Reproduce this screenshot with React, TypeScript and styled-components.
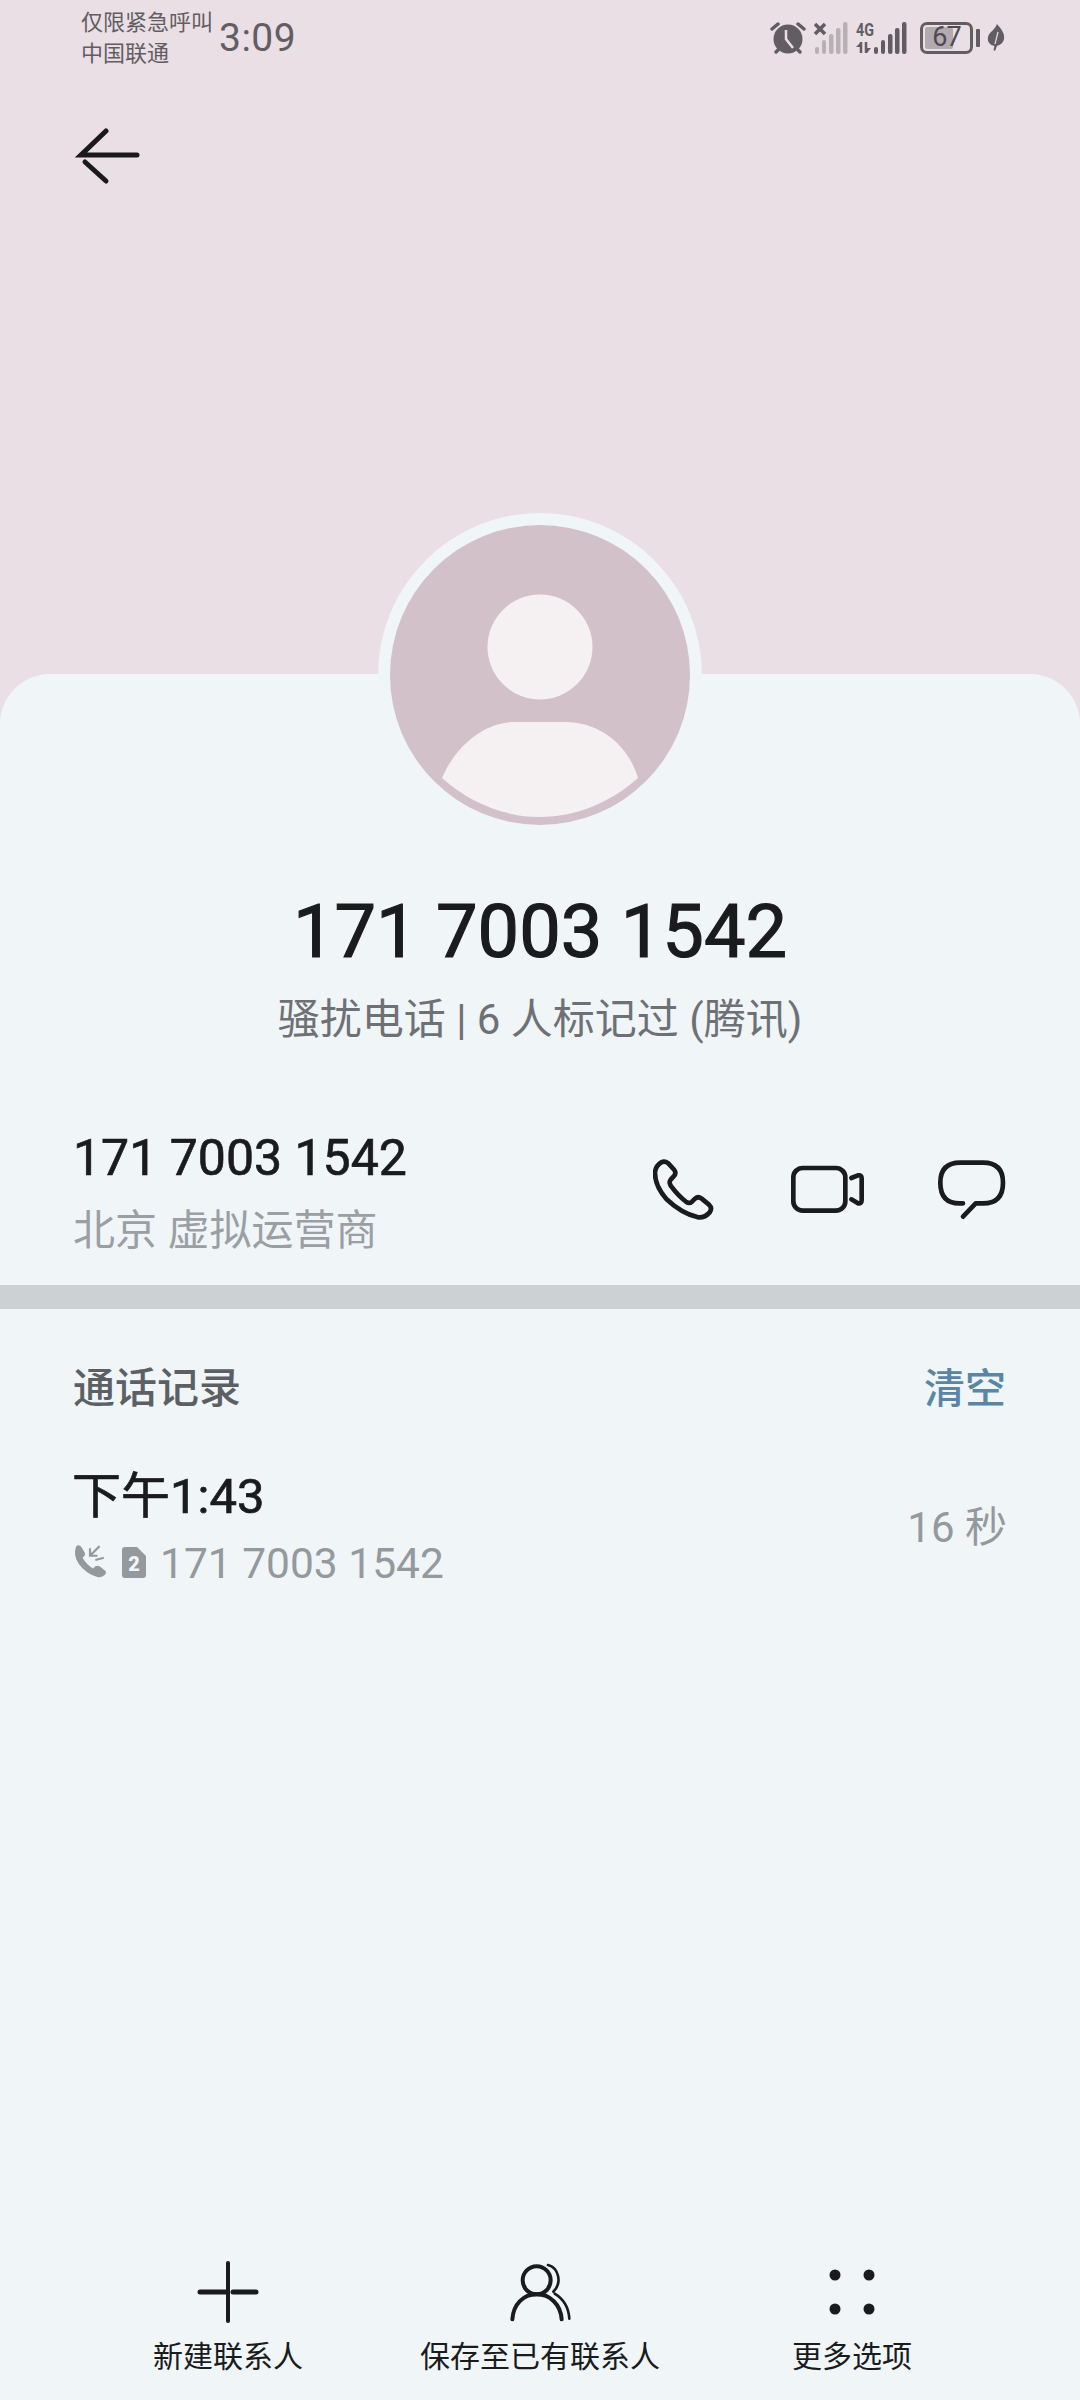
import styled, { createGlobalStyle } from "styled-components"

const GlobalStyle = createGlobalStyle`
  html, body {
    margin: 0;
    padding: 0;
    background: #e9dfe5;
  }
  * {
    box-sizing: border-box;
  }
`

const Page = styled.div`
  width: 1080px;
  height: 2400px;
  display: flex;
  flex-direction: column;
  overflow: hidden;
  background: #e9dfe5;
  font-family: Roboto, "Noto Sans CJK SC", sans-serif;
`

const StatusBar = styled.div`
  height: 70px;
  padding: 5px 75px 0 81px;
  display: flex;
  align-items: center;
  color: #625d63;
`

const Carrier = styled.div`
  width: 138px;
  font-size: 22px;
  line-height: 31px;
  padding-top: 1px;
  white-space: nowrap;
`

const Clock = styled.div`
  font-size: 39px;
  letter-spacing: 0.5px;
`

const StatusIcons = styled.div`
  margin-left: auto;
  display: flex;
  align-items: center;
  gap: 8px;
`

const Battery = styled.div`
  position: relative;
  width: 53px;
  height: 32px;
  margin-left: 4px;
  border: 3px solid #625d63;
  border-radius: 7px;
  display: flex;
  align-items: center;
  justify-content: center;
  font-size: 27px;
  line-height: 1;
  letter-spacing: -1px;
  color: #4f4a50;

  &::before {
    content: "";
    position: absolute;
    left: 2px;
    top: 2px;
    bottom: 2px;
    width: 28px;
    border-radius: 2px;
    background: #b3aaaf;
  }

  &::after {
    content: "";
    position: absolute;
    right: -10px;
    top: 4px;
    width: 4px;
    height: 18px;
    border-radius: 1px;
    background: #625d63;
  }

  span {
    position: relative;
  }
`

const LeafWrap = styled.div`
  margin-left: 6px;
  display: flex;
`

const TopBar = styled.div`
  height: 604px;
  padding: 55px 0 0 75px;
`

const Sheet = styled.div`
  flex: 1;
  position: relative;
  display: flex;
  flex-direction: column;
  background: #f0f5f8;
  border-radius: 50px 50px 0 0;
`

const Avatar = styled.div`
  width: 324px;
  height: 324px;
  margin: -161px auto 0;
  padding: 12px;
  border-radius: 50%;
  background: #f0f5f8;
  flex-shrink: 0;
`

const AvatarCircle = styled.div`
  width: 300px;
  height: 300px;
  border-radius: 50%;
  background: #d2c1c8;

  svg {
    display: block;
  }
`

const Name = styled.div`
  margin-top: 51px;
  text-align: center;
  font-size: 74px;
  line-height: 88px;
  font-weight: 400;
  -webkit-text-stroke: 1.2px #1a1b1d;
  color: #1a1b1d;
`

const Tagline = styled.div`
  margin-top: 16px;
  text-align: center;
  font-size: 42px;
  line-height: 56px;
  color: #6d7175;
`

const NumberRow = styled.div`
  margin-top: 80px;
  padding: 0 74px 0 73px;
  height: 157px;
  display: flex;
  align-items: flex-start;
`

const NumberInfo = styled.div`
  flex: 1;
`

const Number = styled.div`
  font-size: 50px;
  line-height: 60px;
  font-weight: 400;
  -webkit-text-stroke: 0.7px #1a1b1d;
  color: #1a1b1d;
`

const Place = styled.div`
  margin-top: 15px;
  font-size: 42px;
  line-height: 56px;
  color: #9a9fa3;
`

const Actions = styled.div`
  display: flex;
  align-items: center;
  margin-top: 31px;
`

const ActionIcon = styled.svg<{ $left: number }>`
  display: block;
  margin-left: ${(p) => p.$left}px;
  fill: none;
  stroke: #1a1b1d;
  stroke-width: 14;
  stroke-linecap: round;
  stroke-linejoin: round;
`

const Divider = styled.div`
  height: 24px;
  background: #cdd1d4;
  flex-shrink: 0;
`

const SectionHead = styled.div`
  margin-top: 52px;
  padding: 0 74px 0 73px;
  display: flex;
  justify-content: space-between;
  align-items: center;
`

const SectionTitle = styled.div`
  font-size: 42px;
  line-height: 56px;
  font-weight: 500;
  color: #5c6064;
`

const ClearButton = styled.div`
  font-size: 41px;
  line-height: 56px;
  font-weight: 500;
  color: #5a86a6;
`

const CallRow = styled.div`
  margin-top: 50px;
  padding: 0 73px 0 72px;
  display: flex;
  justify-content: space-between;
  align-items: center;
`

const CallTime = styled.div`
  font-size: 49px;
  line-height: 60px;
  font-weight: 400;
  -webkit-text-stroke: 0.7px #1a1b1d;
  color: #1a1b1d;
`

const CallMeta = styled.div`
  margin-top: 9px;
  padding-left: 1px;
  display: flex;
  align-items: center;
  font-size: 42.5px;
  line-height: 56px;
  color: #94999d;

  svg {
    display: block;
    flex-shrink: 0;
  }
`

const SimBadge = styled.svg`
  margin: -4px 14px 0 15px;
`

const Duration = styled.div`
  font-size: 42px;
  line-height: 56px;
  margin-top: -3px;
  color: #94999d;
`

const Toolbar = styled.div`
  margin-top: auto;
  padding: 0 72px 23px;
  display: grid;
  grid-template-columns: repeat(3, 312px);
`

const ToolItem = styled.div`
  display: flex;
  flex-direction: column;
  align-items: center;
`

const ToolIcon = styled.svg<{ $shift?: number }>`
  display: block;
  margin-left: ${(p) => p.$shift ?? 0}px;
  fill: none;
  stroke: #1a1b1d;
  stroke-linecap: round;
`

const ToolLabel = styled.div`
  margin-top: 14px;
  font-size: 30px;
  line-height: 40px;
  color: #1a1b1d;
  white-space: nowrap;
`

const App = () => {
  return (
    <Page>
      <GlobalStyle />
      <StatusBar>
        <Carrier>
          仅限紧急呼叫
          <br />
          中国联通
        </Carrier>
        <Clock>3:09</Clock>
        <StatusIcons>
          <svg width="36" height="34" viewBox="0 0 36 34">
            <circle cx="18" cy="18" r="14.5" fill="#625d63" />
            <path d="M2 8 L8 3 M34 8 L28 3" stroke="#625d63" strokeWidth="3.5" strokeLinecap="round" />
            <path d="M6 31 L9 28 M30 31 L27 28" stroke="#625d63" strokeWidth="3.5" strokeLinecap="round" />
            <path d="M16 9 V18 L23 27" stroke="#e9dfe5" strokeWidth="2.5" fill="none" />
          </svg>
          <svg width="34" height="32" viewBox="0 0 34 32" fill="#b9b0b5">
            <path d="M1 2 L11 12 M11 2 L1 12" stroke="#625d63" strokeWidth="3.5" />
            <rect x="1" y="25" width="4" height="7" rx="2" />
            <rect x="8" y="18" width="4" height="14" rx="2" />
            <rect x="15" y="12" width="4.5" height="20" rx="2" />
            <rect x="22" y="6" width="4.5" height="26" rx="2" />
            <rect x="29" y="0" width="4.5" height="32" rx="2" />
          </svg>
          <svg width="52" height="40" viewBox="0 -4 52 40" fill="#625d63">
            <text x="0" y="13.5" fontFamily="Roboto" fontWeight="700" fontSize="18" textLength="18" lengthAdjust="spacingAndGlyphs">
              4G
            </text>
            <path d="M5 20 V31 M10 20 V31" stroke="#625d63" strokeWidth="2.5" />
            <path d="M0 25 L4 21 V25 Z M11 26 H15 L11 31 Z" />
            <rect x="18" y="25" width="4" height="7" rx="2" />
            <rect x="25" y="18" width="4" height="14" rx="2" />
            <rect x="32" y="12" width="4.5" height="20" rx="2" />
            <rect x="39" y="6" width="4.5" height="26" rx="2" />
            <rect x="46" y="0" width="4.5" height="32" rx="2" />
          </svg>
          <Battery>
            <span>67</span>
          </Battery>
          <LeafWrap>
            <svg width="18" height="27" viewBox="0 0 18 27">
              <path d="M10 0 C14 5 18 9 17 15 C16 20 12 21 10 22 L8 27 L6.5 26 L7.5 22 C3 21 0 18 1 13 C2 8 8 6 10 0 Z" fill="#625d63" />
              <path d="M11 8 L8 20" stroke="#e9dfe5" strokeWidth="1.2" />
            </svg>
          </LeafWrap>
        </StatusIcons>
      </StatusBar>
      <TopBar>
        <svg width="66" height="60" viewBox="74 125 66 60" fill="none" stroke="#1a1a1c" strokeWidth="5" strokeLinecap="round">
          <path d="M136 155 H80 L105 131" />
          <path d="M84 162 L105 181" />
        </svg>
      </TopBar>
      <Sheet>
        <Avatar>
          <AvatarCircle>
            <svg width="300" height="300" viewBox="390 525 300 300">
              <circle cx="540" cy="647" r="52.5" fill="#f5f1f3" />
              <path
                d="M442 778 C456 745 485 722 515 722 H565 C600 722 628 745 638 778 C610 803 575 817 540 817 C505 817 470 803 442 778 Z"
                fill="#f5f1f3"
              />
            </svg>
          </AvatarCircle>
        </Avatar>
        <Name>171 7003 1542</Name>
        <Tagline>骚扰电话 | 6 人标记过 (腾讯)</Tagline>
        <NumberRow>
          <NumberInfo>
            <Number>171 7003 1542</Number>
            <Place>北京 虚拟运营商</Place>
          </NumberInfo>
          <Actions>
            <ActionIcon $left={0} width="62" height="62" viewBox="100 85 186 186">
              <path d="M125 95 Q135 90 146 98 L164 118 Q171 128 162 137 L153 147 Q147 154 153 165 Q175 195 200 214 Q209 220 217 213 L226 204 Q235 196 245 203 L268 222 Q279 232 270 245 Q255 262 235 260 Q185 248 140 205 Q105 165 106 125 Q108 106 125 95 Z" />
            </ActionIcon>
            <ActionIcon $left={75} width="74" height="50" viewBox="512 103 222 150">
              <rect x="522" y="112" width="156" height="128" rx="28" />
              <path d="M696 142 L716 134 Q727 132 727 143 V208 Q727 220 716 218 L696 206" />
            </ActionIcon>
            <ActionIcon $left={74} width="68" height="60" viewBox="955 92 204 180">
              <path d="M1030 222 H1020 Q962 222 962 160 Q962 100 1022 100 H1090 Q1150 100 1150 160 Q1150 222 1090 222 H1068 L1030 262" />
            </ActionIcon>
          </Actions>
        </NumberRow>
        <Divider />
        <SectionHead>
          <SectionTitle>通话记录</SectionTitle>
          <ClearButton>清空</ClearButton>
        </SectionHead>
        <CallRow>
          <div>
            <CallTime>下午1:43</CallTime>
            <CallMeta>
              <svg width="34" height="34" viewBox="0 0 32 32" fill="#94999d" style={{ marginTop: -6 }}>
                <path d="M3 2 Q6 0 8 3 L11 8 Q12 10 10 12 L9 13 Q13 20 19 23 L21 21 Q23 20 25 21 L30 25 Q32 27 30 29 Q27 32 23 31 Q12 28 5 18 Q0 10 3 2 Z" />
                <path d="M25 2 L16 11 M16 4 V11 H23 M21 15 L29 13" stroke="#94999d" strokeWidth="2" fill="none" />
              </svg>
              <SimBadge width="24" height="31" viewBox="0 0 24 31">
                <path d="M3 0 H15 L24 9 V28 Q24 31 21 31 H3 Q0 31 0 28 V3 Q0 0 3 0 Z" fill="#94999d" />
                <text x="12" y="24" fontFamily="Roboto" fontWeight="900" fontSize="20" textAnchor="middle" fill="#f0f5f8">
                  2
                </text>
              </SimBadge>
              171 7003 1542
            </CallMeta>
          </div>
          <Duration>16 秒</Duration>
        </CallRow>
        <Toolbar>
          <ToolItem>
            <ToolIcon width="62" height="62" viewBox="0 0 62 62" strokeWidth="4">
              <path d="M31 2 V60" />
              <path d="M3 31 H30 M36 31 H59" strokeWidth="5" />
            </ToolIcon>
            <ToolLabel>新建联系人</ToolLabel>
          </ToolItem>
          <ToolItem>
            <ToolIcon $shift={6} width="66" height="62" viewBox="60 30 198 186" strokeWidth="12">
              <circle cx="140" cy="88" r="42" />
              <path d="M67 205 C70 160 100 130 140 130 C180 130 212 160 215 205" />
              <path d="M174 42 C205 50 218 95 190 122" strokeWidth="8" />
              <path d="M194 128 C222 145 236 170 238 203" strokeWidth="8" />
            </ToolIcon>
            <ToolLabel>保存至已有联系人</ToolLabel>
          </ToolItem>
          <ToolItem>
            <ToolIcon width="62" height="62" viewBox="0 0 62 62" stroke="none">
              <circle cx="14" cy="14" r="5.5" fill="#1a1b1d" stroke="none" />
              <circle cx="48" cy="14" r="5.5" fill="#1a1b1d" stroke="none" />
              <circle cx="14" cy="48" r="5.5" fill="#1a1b1d" stroke="none" />
              <circle cx="48" cy="48" r="5.5" fill="#1a1b1d" stroke="none" />
            </ToolIcon>
            <ToolLabel>更多选项</ToolLabel>
          </ToolItem>
        </Toolbar>
      </Sheet>
    </Page>
  )
}

export default App
